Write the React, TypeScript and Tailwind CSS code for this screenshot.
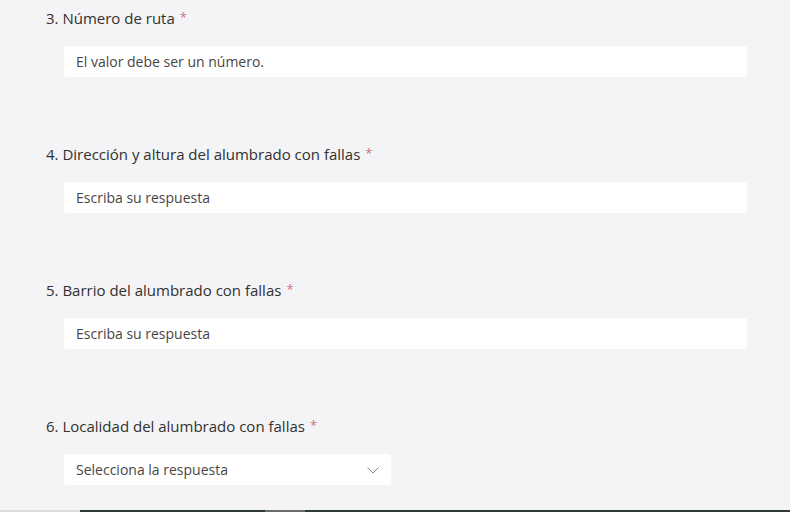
const font = { fontFamily: '"Segoe UI", "Open Sans", "Noto Sans", sans-serif' };

type Question = {
  n: number;
  title: string;
  placeholder: string;
  select?: boolean;
};

const questions: Question[] = [
  { n: 3, title: "Número de ruta", placeholder: "El valor debe ser un número." },
  { n: 4, title: "Dirección y altura del alumbrado con fallas", placeholder: "Escriba su respuesta" },
  { n: 5, title: "Barrio del alumbrado con fallas", placeholder: "Escriba su respuesta" },
  { n: 6, title: "Localidad del alumbrado con fallas", placeholder: "Selecciona la respuesta", select: true },
];

const ChevronDown = () => (
  <svg width="16" height="16" viewBox="0 0 16 16" fill="none" stroke="#8a8886" strokeWidth="1">
    <path d="M2.5 5.5 L8 11 L13.5 5.5" />
  </svg>
);

const QuestionBlock = ({ q }: { q: Question }) => (
  <div className="flex flex-col">
    <div className="h-[26px] leading-[26px] text-[15px] text-[#323130] flex items-start">
      <span>{q.n}. {q.title}</span>
      <span className="ml-[5px] text-[13px] leading-[24px] text-[#d0707e]">*</span>
    </div>
    <div
      className={`mt-[15px] ml-[18px] h-[31px] bg-white rounded-[3px] flex items-center justify-between pl-[12px] pr-[10px] text-[14px] text-[#484644] ${
        q.select ? "w-[327px]" : "w-[683px]"
      }`}
    >
      <span>{q.placeholder}</span>
      {q.select && <ChevronDown />}
    </div>
  </div>
);

export default function App() {
  return (
    <div className="w-[790px] h-[512px] bg-[#f4f4f6] overflow-hidden flex flex-col" style={font}>
      <div className="flex-1 pl-[46px] pt-[5px] flex flex-col gap-[64px]">
        {questions.map((q) => (
          <QuestionBlock key={q.n} q={q} />
        ))}
      </div>
      <div className="h-[2px] flex">
        <div className="w-[80px] bg-[#dcdcdc]" />
        <div className="w-[185px] bg-[#2d3a36]" />
        <div className="w-[40px] bg-[#6b6b6b]" />
        <div className="flex-1 bg-[#2d3a36]" />
      </div>
    </div>
  );
}
